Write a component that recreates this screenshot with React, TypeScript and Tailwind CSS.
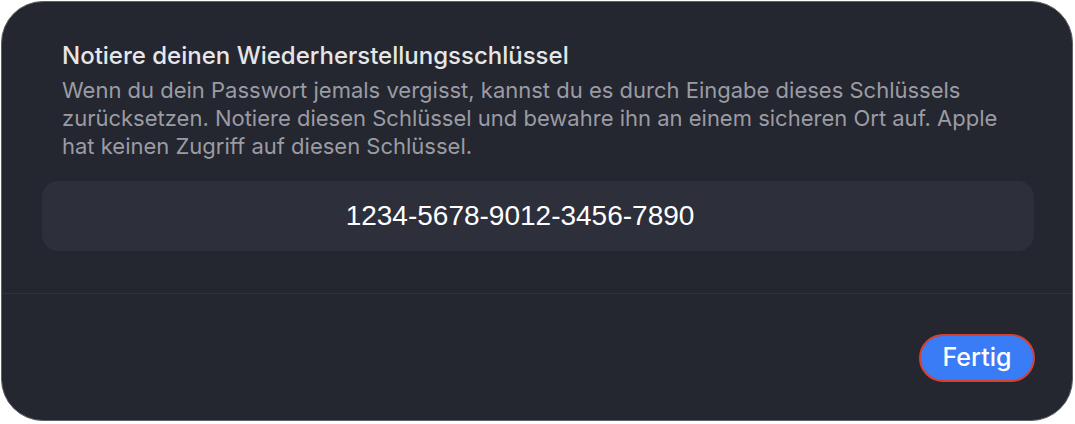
export default function App() {
  return (
    <div className="h-[424px] w-[1075px] bg-white p-px">
      <div className="flex h-[420px] w-[1072px] flex-col overflow-hidden rounded-[42px] border border-[#5f6068] bg-[#242630] font-['Inter','Noto_Sans',sans-serif]">
        <div className="px-[60px] pt-[40px]">
          <h1 className="text-[24px] font-medium leading-[28px] text-[#e6e6e8]">
            Notiere deinen Wiederherstellungsschlüssel
          </h1>
          <p className="mt-[6px] text-[22px] leading-[28px] text-[#9b9ca3]">
            Wenn du dein Passwort jemals vergisst, kannst du es durch Eingabe dieses Schlüssels
            zurücksetzen. Notiere diesen Schlüssel und bewahre ihn an einem sicheren Ort auf. Apple
            hat keinen Zugriff auf diesen Schlüssel.
          </p>
        </div>
        <div className="ml-[40px] mr-[38px] mt-[21px] flex h-[70px] items-center justify-center rounded-[16px] bg-[#2d2f3b] pr-[36px]">
          <span className="font-['Liberation_Sans',Arial,sans-serif] text-[28px] text-white">
            1234-5678-9012-3456-7890
          </span>
        </div>
        <div className="mt-[42px] h-px bg-[#30323d]" />
        <div className="flex flex-1 items-start justify-end pr-[37px] pt-[40px]">
          <button className="flex h-[48px] w-[116px] items-center justify-center rounded-full border-2 border-[#d5412f] bg-[#3a7bf6] text-[25px] font-medium text-white">
            Fertig
          </button>
        </div>
      </div>
    </div>
  );
}
